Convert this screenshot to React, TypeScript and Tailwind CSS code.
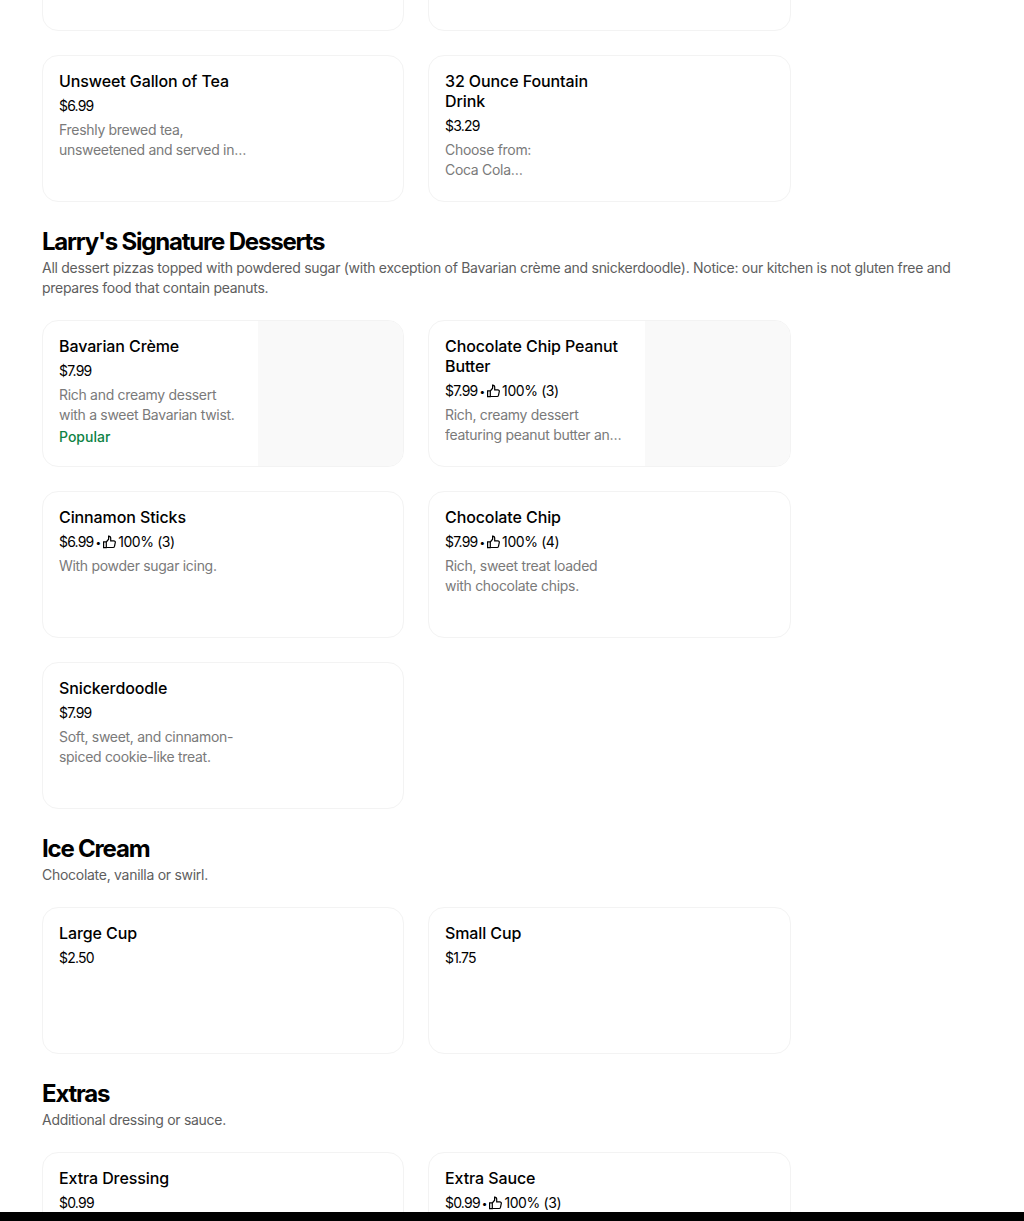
import React from "react";

type Item = { title: string; price: string; rating?: string; desc?: string; popular?: boolean; image?: boolean };

function Thumb() {
  return (
    <svg width="13" height="14" viewBox="0 0 13 14" fill="none" stroke="currentColor" strokeWidth="1.2" className="shrink-0">
      <path d="M.6 6.8h2.7v5.8H.6z" />
      <path d="M3.3 7 5.6 4.2V1.2c1.3 0 2.1.9 2.1 2.1v2.5h3.1c1 0 1.7.9 1.5 1.7l-.8 3.9c-.2.7-.7 1.1-1.4 1.1H3.3" />
    </svg>
  );
}

function Card({ item }: { item: Item }) {
  return (
    <div className="flex h-[147px] overflow-hidden rounded-2xl border border-[#f3f3f3] bg-white">
      <div className="min-w-0 flex-1 pl-4 pr-[11px] pt-[15px]">
        <div className="text-base leading-5 font-medium tracking-[-0.1px] whitespace-pre-line text-black">{item.title}</div>
        <div className="mt-[5px] flex items-center text-sm leading-5 text-black">
          <span className="tracking-[-0.8px]">{item.price}</span>
          {item.rating && (
            <>
              <span className="mr-[2px] ml-[2px] text-[10px]">•</span>
              <Thumb />
              <span className="ml-[2px] tracking-[-0.4px]">{item.rating}</span>
            </>
          )}
        </div>
        {item.desc && (
          <div className="mt-1 line-clamp-2 text-sm leading-5 tracking-[-0.3px] whitespace-pre-line text-[#7a7a7a]">
            {item.desc}
          </div>
        )}
        {item.popular && <div className="mt-[2px] text-sm leading-5 font-medium text-[#0e8345]">Popular</div>}
      </div>
      <div className={item.image ? "w-[145px] shrink-0 bg-[#f9f9f9]" : "w-[145px] shrink-0"} />
    </div>
  );
}

function Section({ title, desc, items }: { title: string; desc: string; items: Item[] }) {
  return (
    <section className="mt-6">
      <h2 className="text-2xl leading-8 font-bold tracking-[-1.2px] text-black">{title}</h2>
      <p className="text-sm leading-5 tracking-[-0.28px] text-[#5e5e5e]">{desc}</p>
      <div className="mt-[22px] grid w-[749px] grid-cols-[362px_363px] gap-6">
        {items.map((item) => (
          <Card key={item.title} item={item} />
        ))}
      </div>
    </section>
  );
}

export default function App() {
  return (
    <div className="flex h-[1221px] w-[1024px] flex-col overflow-hidden bg-white font-['Inter','Liberation_Sans',sans-serif]">
      <main className="min-h-0 flex-1 overflow-hidden px-[42px]">
        <div className="-mt-[116px] grid w-[749px] grid-cols-[362px_363px] gap-6">
          <Card item={{ title: "Sweet Gallon of Tea", price: "$6.99" }} />
          <Card item={{ title: "20 Ounce Bottle", price: "$2.79" }} />
          <Card
            item={{
              title: "Unsweet Gallon of Tea",
              price: "$6.99",
              desc: "Freshly brewed tea,\nunsweetened and served in\na convenient gallon jug.",
            }}
          />
          <Card
            item={{
              title: "32 Ounce Fountain\nDrink",
              price: "$3.29",
              desc: "Choose from:\nCoca Cola\nDiet Coke\nSprite\nDr Pepper\nLemonade",
            }}
          />
        </div>
        <Section
          title="Larry's Signature Desserts"
          desc="All dessert pizzas topped with powdered sugar (with exception of Bavarian crème and snickerdoodle). Notice: our kitchen is not gluten free and prepares food that contain peanuts."
          items={[
            { title: "Bavarian Crème", price: "$7.99", desc: "Rich and creamy dessert\nwith a sweet Bavarian twist.", popular: true, image: true },
            { title: "Chocolate Chip Peanut\nButter", price: "$7.99", rating: "100% (3)", desc: "Rich, creamy dessert\nfeaturing peanut butter an\nd chocolate chips on a golden crust.", image: true },
            { title: "Cinnamon Sticks", price: "$6.99", rating: "100% (3)", desc: "With powder sugar icing." },
            { title: "Chocolate Chip", price: "$7.99", rating: "100% (4)", desc: "Rich, sweet treat loaded\nwith chocolate chips." },
            { title: "Snickerdoodle", price: "$7.99", desc: "Soft, sweet, and cinnamon-\nspiced cookie-like treat." },
          ]}
        />
        <Section
          title="Ice Cream"
          desc="Chocolate, vanilla or swirl."
          items={[
            { title: "Large Cup", price: "$2.50" },
            { title: "Small Cup", price: "$1.75" },
          ]}
        />
        <Section
          title="Extras"
          desc="Additional dressing or sauce."
          items={[
            { title: "Extra Dressing", price: "$0.99" },
            { title: "Extra Sauce", price: "$0.99", rating: "100% (3)" },
          ]}
        />
      </main>
      <div className="h-[9px] shrink-0 bg-black" />
    </div>
  );
}
